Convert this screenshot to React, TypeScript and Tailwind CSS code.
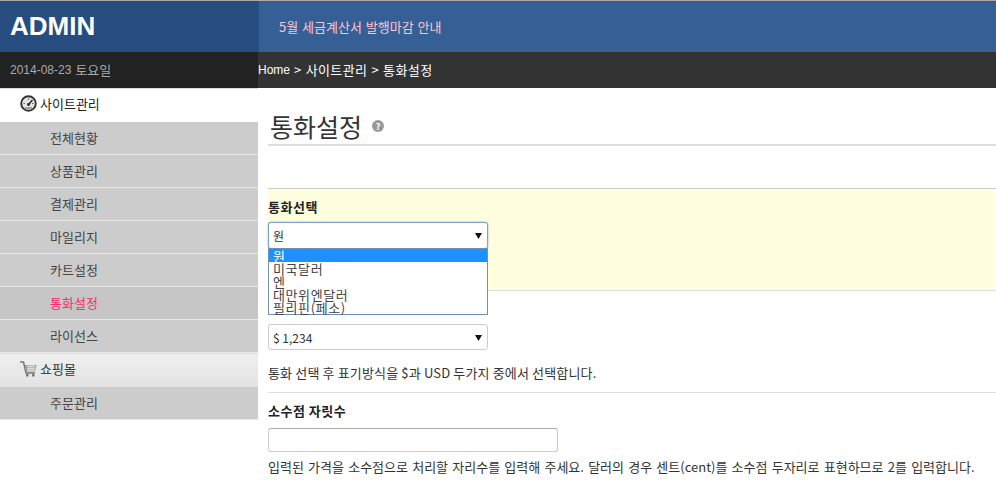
import { useState } from 'react';

const FONT = "font-['Noto_Sans_CJK_KR','Noto_Sans',sans-serif]";

const subMenu1 = ['전체현황', '상품관리', '결제관리', '마일리지', '카트설정', '통화설정', '라이선스'];
const currencies = ['원', '미국달러', '엔', '대만위엔달러', '필리핀(페소)'];

const Arrow = () => (
  <svg width="7" height="6" viewBox="0 0 7 6" className="shrink-0">
    <path d="M0 0H7L3.500 6Z" fill="#111" />
  </svg>
);

const ClockIcon = () => (
  <svg width="17" height="17" viewBox="0 0 17 17" className="shrink-0">
    <circle cx="8.500" cy="8.500" r="7.300" fill="#e4e4e4" stroke="#333" strokeWidth="1.900" />
    <path d="M8.500 9.500L12.500 5" stroke="#222" strokeWidth="1.400" />
    <circle cx="8.500" cy="9.500" r="1.400" fill="#222" />
    <path d="M3.500 8.500h1.500M8.500 3.500V5M12 8.500h1.500" stroke="#666" strokeWidth="1" />
    <path d="M5 13h7" stroke="#888" strokeWidth="1.400" />
  </svg>
);

const CartIcon = () => (
  <svg width="17" height="16" viewBox="0 0 17 16" className="shrink-0">
    <path d="M0 1h3.500L6 12h9" fill="none" stroke="#777" strokeWidth="1.500" />
    <path d="M4.500 4H16.500L15 10.500H6Z" fill="#999" />
    <path d="M7 5.500h8M7 7.500h7.500M7.500 9.300h6.500M8 4v6M10 4v6M12 4v6M14 4v6" stroke="#eee" strokeWidth="0.700" />
    <rect x="6" y="13" width="2.500" height="2.500" fill="#777" />
    <rect x="12" y="13" width="2.500" height="2.500" fill="#777" />
  </svg>
);

const HelpIcon = () => (
  <span className="flex h-3 w-3 items-center justify-center rounded-full bg-[#999] text-[9px] font-bold leading-none text-white">
    ?
  </span>
);

const SubItem = ({ label, active }: { label: string; active?: boolean }) => (
  <div
    className={`flex h-[33px] items-center border-b border-[#e8e8e8] pl-[50px] text-[13px] ${
      active ? 'bg-[#c6c6c6] text-[#ff2a68]' : 'bg-[#cccccc] text-[#444]'
    }`}
  >
    {label}
  </div>
);

const App = () => {
  const [selected] = useState(0);

  return (
    <div className={`${FONT} h-[485px] w-[996px] overflow-hidden bg-white text-[13px] text-[#333]`}>
      <div className="h-px bg-[#aaa]" />

      {/* 상단 헤더 */}
      <div className="flex h-[51px]">
        <div className="flex w-[259px] items-center bg-[#274c7f] pl-[10px] font-['Liberation_Sans',sans-serif] text-[26px] font-bold text-white">
          ADMIN
        </div>
        <div className="flex flex-1 items-center bg-[#365f96] pl-5 text-[13px] text-[#ffc4d0] [word-spacing:1px]">
          5월 세금계산서 발행마감 안내
        </div>
      </div>

      {/* 날짜, 경로 */}
      <div className="flex h-9">
        <div className="flex w-[258px] items-center gap-1 bg-[#222222] pl-[10px] text-[#aaa]">
          <span className="font-['Liberation_Sans',sans-serif] text-[12px]">2014-08-23</span>
          <span>토요일</span>
        </div>
        <div className="flex flex-1 items-center gap-1 bg-[#333333] tracking-[0.4px] text-white">
          <span className="font-['Liberation_Sans',sans-serif] text-[12px] tracking-normal">Home</span>
          <span>&gt;</span>
          <span>사이트관리</span>
          <span>&gt;</span>
          <span>통화설정</span>
        </div>
      </div>

      <div className="flex">
        {/* 사이드 메뉴 */}
        <div className="w-[258px] shrink-0">
          <div className="flex h-[34px] items-center gap-[3px] border-t border-[#ddd] pb-1 pl-5 text-[#222]">
            <ClockIcon />
            사이트관리
          </div>
          {subMenu1.map((label) => (
            <SubItem key={label} label={label} active={label === '통화설정'} />
          ))}
          <div className="flex h-[34px] items-center gap-[3px] border-t border-[#ddd] bg-gradient-to-b from-[#f0f0f0] to-[#e2e2e2] pb-1 pl-5 text-[#333]">
            <CartIcon />
            쇼핑몰
          </div>
          <SubItem label="주문관리" />
        </div>

        {/* 본문 */}
        <div className="min-w-0 flex-1 pl-[10px]">
          <div className="h-[56px] pt-[20px]">
            <div className="flex items-center gap-[10px] border-b-2 border-[#ddd] pl-0.5 text-[25px] leading-[36px] text-[#333]">
              통화설정
              <HelpIcon />
            </div>
          </div>

          <div className="relative mt-[44px] h-[103px] border-y border-[#ccc] border-b-[#ddd] bg-[#ffffe0]">
            <div className="pt-[9px] text-[13px] font-bold leading-[18px] tracking-[0.5px] text-[#222]">통화선택</div>
            <div className="mt-[6px] flex h-[27px] w-[220px] items-center justify-between rounded-[3px] border border-[#7da2ce] bg-white pl-1 pr-[5px] text-[12px] shadow-[0_0_2px_#7da2ce]">
              {currencies[selected]}
              <Arrow />
            </div>

            {/* 열린 드롭다운 */}
            <div className="absolute left-0 top-[59px] w-[220px] border border-[#6d8fb8] bg-white text-[13px] leading-[13px] tracking-[0.6px] text-[#444]">
              {currencies.map((c, i) => (
                <div key={c} className={i === selected ? 'bg-[#1e90ff] pl-1 text-white' : 'pl-1'}>
                  {c}
                </div>
              ))}
            </div>
          </div>

          <div className="pt-[33px]">
            <div className="flex h-[26px] w-[220px] items-center justify-between rounded-[3px] border border-[#ccc] bg-white pl-1 pr-[5px] pt-px text-[12px]">
              $ 1,234
              <Arrow />
            </div>
            <p className="mt-[14px] h-[28px] leading-[18px] tracking-[0.15px] text-[#333]">
              통화 선택 후 표기방식을 $과 USD 두가지 중에서 선택합니다.
            </p>
          </div>

          <div className="border-t border-[#ddd]">
            <div className="pt-[9px] font-bold leading-[18px] tracking-[0.5px] text-[#222]">소수점 자릿수</div>
            <div className="mt-2 h-6 w-[290px] rounded-[3px] border border-[#ccc] border-t-[#aaa] bg-white" />
            <p className="mt-1.5 whitespace-nowrap leading-[18px] text-[#333] [word-spacing:1.3px]">
              입력된 가격을 소수점으로 처리할 자리수를 입력해 주세요. 달러의 경우 센트(cent)를 소수점 두자리로 표현하므로 2를 입력합니다.
            </p>
          </div>
        </div>
      </div>
    </div>
  );
};

export default App;
